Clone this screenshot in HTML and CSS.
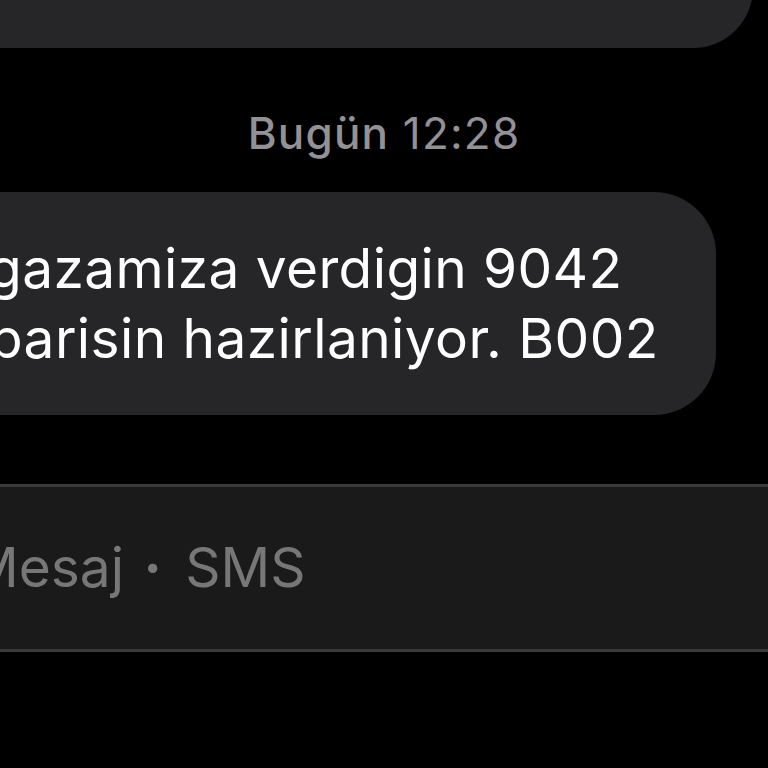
FILE: index.html
```html
<!DOCTYPE html>
<html lang="tr">
<head>
<meta charset="utf-8">
<title>Mesajlar</title>
<link rel="stylesheet" href="styles.css">
</head>
<body>
<div class="screen">
  <div class="bubble bubble-prev"></div>
  <div class="stamp"><span class="stamp-day">Bugün</span> 12:28</div>
  <div class="bubble bubble-msg">
    <div class="line line-1">gazamiza verdigin 9042</div>
    <div class="line line-2">parisin hazirlaniyor. B002</div>
  </div>
  <div class="composer">
    <div class="placeholder">Mesaj <span class="sep">·</span> SMS</div>
  </div>
</div>
</body>
</html>
```

FILE: styles.css
```css
html, body {
  margin: 0;
  padding: 0;
  background: #000;
}
body {
  width: 768px;
  height: 768px;
  overflow: hidden;
  font-family: Inter, "Liberation Sans", sans-serif;
}
.screen {
  display: flex;
  flex-direction: column;
  width: 768px;
}
.bubble {
  background: #262628;
}
.bubble-prev {
  height: 108px;
  margin-top: -60px;
  margin-left: -60px;
  margin-right: 15px;
  border-bottom-right-radius: 60px;
}
.stamp {
  margin-top: 60px;
  text-align: center;
  color: #929296;
  font-size: 44px;
  line-height: 50px;
  letter-spacing: 1.2px;
  font-weight: 400;
}
.stamp-day {
  font-weight: 500;
}
.bubble-msg {
  margin-top: 34px;
  margin-left: -60px;
  margin-right: 52px;
  padding: 41px 0 42px 60px;
  border-radius: 62px;
  color: #fff;
  font-size: 55px;
  line-height: 70px;
  letter-spacing: 0.4px;
}
.line {
  white-space: nowrap;
}
.line-1 {
  margin-left: -12px;
}
.line-2 {
  margin-left: -11px;
}
.composer {
  margin-top: 69px;
  margin-left: -20px;
  margin-right: -20px;
  background: #1a1a1a;
  border-top: 3px solid #3a3a3a;
  border-bottom: 3px solid #3a3a3a;
  padding: 45px 0 47px 20px;
}
.placeholder {
  color: #777777;
  font-size: 55px;
  line-height: 70px;
  white-space: nowrap;
  margin-left: -31px;
}
.sep {
  font-weight: 700;
  margin-left: 4px;
  margin-right: 8px;
}
```
